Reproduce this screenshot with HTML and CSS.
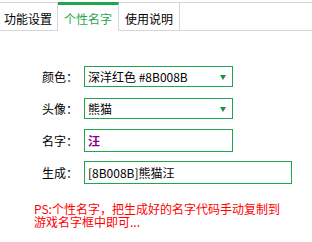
FILE: index.html
```html
<!DOCTYPE html>
<html>

<head>
    <meta http-equiv="Content-Type" content="text/html; charset=utf-8" />
    <title>个性名字</title>
    <link rel="stylesheet" href="styles.css">
</head>

<body>
    <div class="tabs">
        <div class="tab first">功能设置</div>
        <div class="tab active">个性名字</div>
        <div class="tab">使用说明</div>
        <div class="fill"></div>
    </div>
    <div class="form">
        <div class="row r1">
            <span class="label">颜色：</span>
            <div class="select">深洋红色 #8B008B<i class="arrow"></i></div>
        </div>
        <div class="row r2">
            <span class="label">头像：</span>
            <div class="select">熊猫<i class="arrow"></i></div>
        </div>
        <div class="row r3">
            <span class="label">名字：</span>
            <div class="input name">汪</div>
        </div>
        <div class="row r4">
            <span class="label">生成：</span>
            <div class="input wide">[8B008B]熊猫汪</div>
        </div>
    </div>
    <p class="tip">PS:个性名字，把生成好的名字代码手动复制到游戏名字框中即可...</p>
</body>

</html>
```

FILE: styles.css
```css
* {
    margin: 0;
    padding: 0;
    box-sizing: border-box;
}

body {
    background: #fff;
    font-family: "Noto Sans CJK SC", "DejaVu Sans", sans-serif;
    font-size: 12px;
    color: #000;
}

.tabs {
    display: flex;
    margin-top: 2px;
    height: 29px;
}

.tab {
    border-top: 1px solid #d6d6d6;
    border-bottom: 1px solid #d6d6d6;
    border-right: 1px solid #d6d6d6;
    padding: 9px 6px 4px;
    line-height: 14px;
    white-space: nowrap;
}

.tab.first {
    padding-left: 4px;
    padding-right: 5px;
}

.tab.active {
    border-top: 3px solid #1fa64d;
    border-bottom-color: #fff;
    padding-top: 7px;
    color: #1fa64d;
}

.fill {
    flex: 1;
    border-top: 1px solid #d6d6d6;
    border-bottom: 1px solid #d6d6d6;
}

.form {
    margin-top: 35px;
    padding-left: 42px;
}

.row {
    display: flex;
    align-items: center;
}

.r1,
.r2 {
    margin-bottom: 11px;
}

.r3 {
    margin-bottom: 9px;
}

.r2 {
    margin-bottom: 10px;
}

.label {
    width: 42px;
    line-height: 14px;
}

.select,
.input {
    position: relative;
    border: 1px solid #1fa64d;
    padding-left: 3px;
    line-height: 14px;
    display: flex;
    align-items: center;
}

.select {
    width: 149px;
    height: 21px;
}

.input {
    height: 23px;
}

.name {
    width: 149px;
    color: #8b008b;
    font-weight: bold;
}

.wide {
    width: 208px;
}

.arrow {
    position: absolute;
    right: 6px;
    top: 8px;
    width: 0;
    height: 0;
    border-left: 3.5px solid transparent;
    border-right: 3.5px solid transparent;
    border-top: 5px solid #1e8f42;
}

.tip {
    margin: 18px 0 0 34px;
    width: 248px;
    line-height: 13px;
    color: #ff0000;
}
```
